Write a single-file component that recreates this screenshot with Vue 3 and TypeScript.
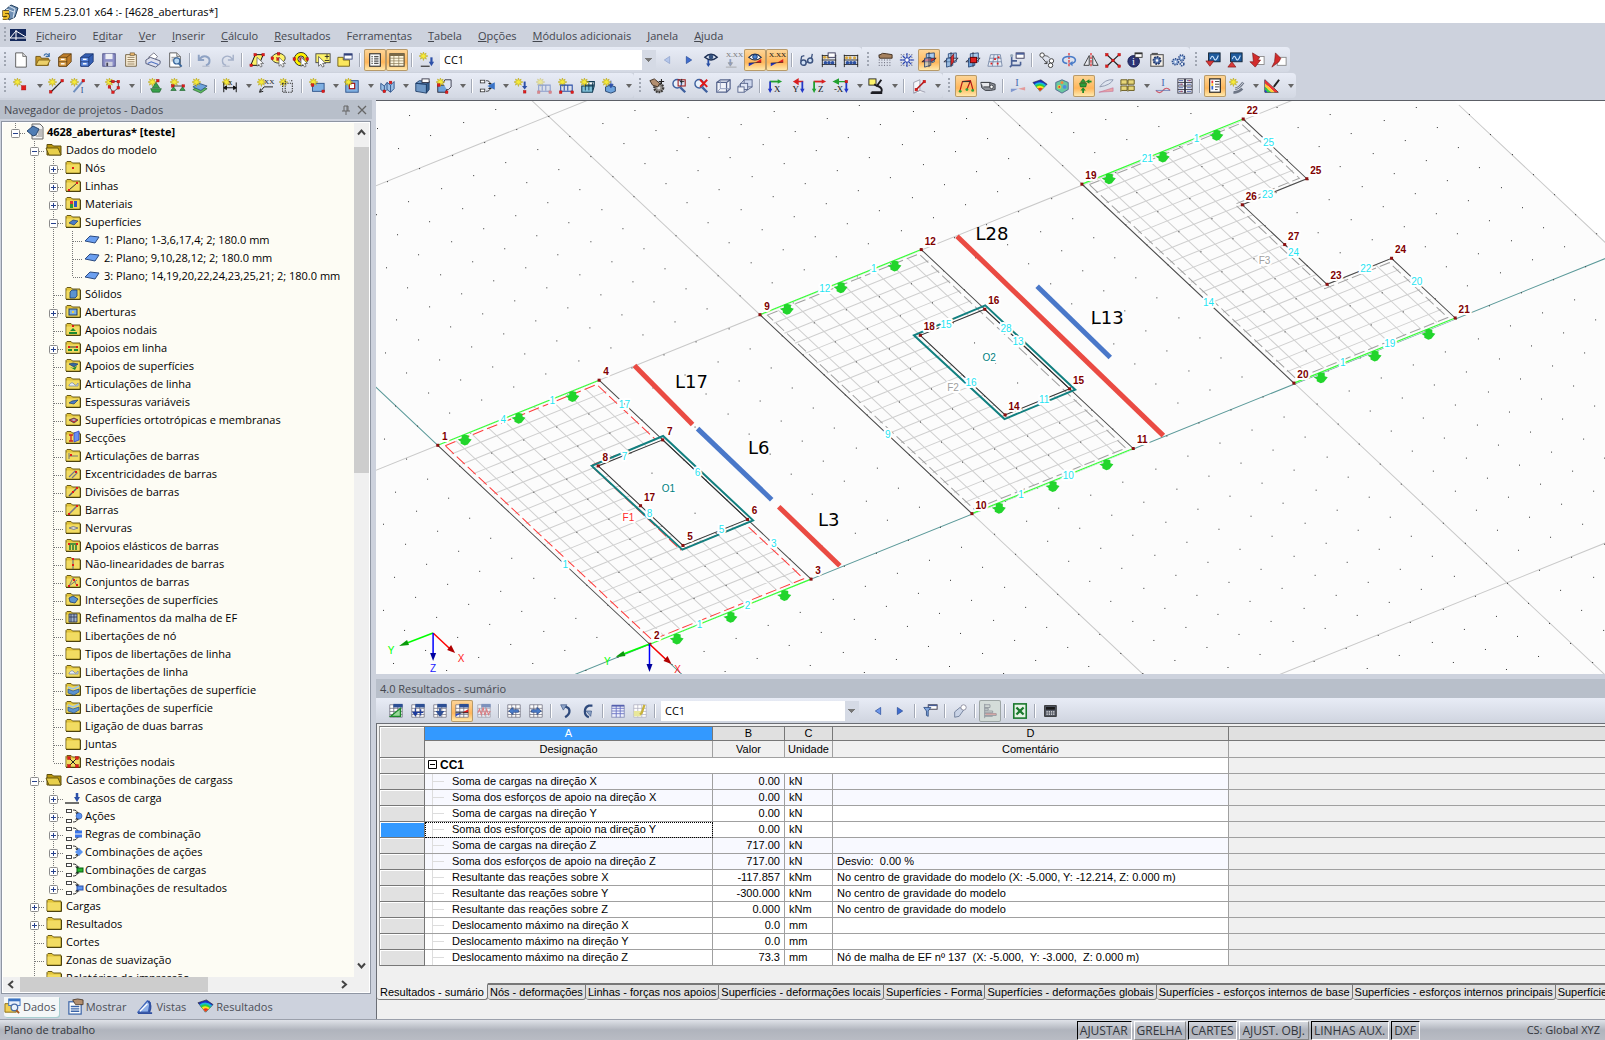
<script setup lang="ts">
import { ref } from 'vue'

type Pt = [number, number]

/* ---------- icon drawing helpers ---------- */
const p = (d: string, fill = 'none', stroke = 'none', w = 1) =>
  `<path d="${d}" fill="${fill}" stroke="${stroke}" stroke-width="${w}"/>`
const box = (x: number, y: number, w: number, h: number, fill: string, stroke = 'none', sw = 1) =>
  `<rect x="${x}" y="${y}" width="${w}" height="${h}" fill="${fill}" stroke="${stroke}" stroke-width="${sw}"/>`
const dot = (x: number, y: number, r: number, fill: string, stroke = 'none', sw = 1) =>
  `<circle cx="${x}" cy="${y}" r="${r}" fill="${fill}" stroke="${stroke}" stroke-width="${sw}"/>`
const red = (x: number, y: number, s = 3) => box(x - s / 2, y - s / 2, s, s, '#e01c1c', '#a01010', 0.4)
const rd = (x: number, y: number) => box(x - 1, y - 1, 2, 2, '#e01c1c')
const word = (x: number, y: number, s: string, size = 8, fill = '#333') =>
  `<text x="${x}" y="${y}" font-size="${size}" font-family="Liberation Serif, serif" fill="${fill}">${s}</text>`
const dashed = (s: string, pattern: string) => s.replace('/>', ` stroke-dasharray="${pattern}"/>`)

const star = p('M5 0l.8 2.6L8 1.2 7.2 3.8 10 4.5 7.2 5.4 8.3 8 5.7 6.5 5 9.5 4.1 6.5 1.5 8 2.6 5.4 0 4.5 2.7 3.7 1.6 1.2 4.2 2.6z', '#f6ea3a', '#b3a010', 0.6)
const cursor = p('M9 6v10l2.300-2 1.800 3 1.700-1-1.600-3h3.200z', '#fff', '#555', 0.8)
const yellow = '#fdf36a'
const drawer = (a: string, b: string, c: string) =>
  p('M2 6l5-4h9v9l-5 5H2z', b, c, 0.8) + p('M2 6h9v10H2z', a, c, 0.8) + p('M2 11h9M11 6l5-4', 'none', c, 0.8) +
  box(4.5, 7.5, 4, 1.5, '#fff') + box(4.5, 12.5, 4, 1.5, '#fff')
const sheet = p('M3 1h8l4 4v12H3z', '#fff', '#555', 1) + p('M11 1v4h4', '#ddd', '#555', 0.8)
const grid = (c = '#667') => p('M2 2h14v14H2zM2 6h14M2 9.5h14M2 13h14M6.5 2v14M11 2v14', '#fff', c, 0.8)
const gridTop = grid() + box(6, 1, 10.5, 4, '#2c4f95')
const dotted = dashed(p('M2 3h14M2 6h14M2 9h14M2 12h14M2 15h14', 'none', '#445', 1), '1 2')
const blue = '#4a7cc8'
const flow = box(1.5, 2.5, 5, 3, '#fff', '#333', 0.9) + box(1.5, 12.5, 5, 3, '#fff', '#333', 0.9) +
  p('M8 3c3 0 4 1 4.5 3M8 15c3 0 4-1 4.5-3', 'none', '#333', 1) + p('M10 5.5h4.500l-2 2.500zM10 12.500h4.500l-2-2.500z', '#222')
const eye = p('M2 6q7-7 14 0-7 6-14 0z', '#fff', '#1c2f55', 1.3) + dot(9, 5.5, 2.6, '#4d86d4', '#16315f')
const diag = p('M2 16V12.5L9 12z', '#2033c0') + p('M9 12l7-4v4z', '#e02020') + p('M2 12.5L16 11.5', 'none', '#222', 0.7)
const lens = dot(7, 6.5, 4.8, '#e9f2fb', '#3d5f9e', 1.6) + p('M10.5 10.5l5.5 5.5', 'none', '#3d5f9e', 2.6)
const cube = p('M2 5l4-3h11v10l-4 4H2z', '#f1f3f9', '#56648c', 1.4) + p('M2 5h11v11M13 5l4-3', 'none', '#56648c', 1.4) + p('M6 2v10h11M6 12l-4 4', 'none', '#8b97b8', 1)
const support = p('M9 5l4 6H5z', '#37a04a', '#155b22', 0.7) + p('M3 12h12l-2 4H5z', '#37a04a', '#155b22', 0.7)
const rainbow = p('M1 5l9-3 7 5-8 8z', '#1b2fc4', '#222', 0.6) + p('M2.500 7q7-5 13.500 1L9 14.600z', '#18b8d8') + p('M3.500 8.500q6-4 11 1L9 14.500z', '#2ed03c') +
  p('M5 10q4-3 8.500.5L9 14.500z', '#ffe21c') + p('M6.500 11.800q3-2 5.500.2L9 14.500z', '#f03020')
const axisPair = (h: string, v: string, s: string, left = false) =>
  (left
    ? p('M16 4H6M6 4l4-2.5v5z', h, h, 1.8) + p('M15 4v10', 'none', v, 2) + p('M12.5 12h5L15 17z', v)
    : p('M3 4h10', 'none', h, 2) + p('M12 1.5v5L17 4z', h) + p('M3.5 4v10', 'none', v, 2) + p('M1 12h5l-2.500 5z', v)) +
  word(left ? 4 : 8, 16, s, 10, '#111')
const planeCube = (flat: string, side: string) =>
  p('M6 6V2l9-1v10l-3 1', '#a9cbee', '#1d3c6e', 0.9) + p('M1 11l5-4h11l-5 4z', flat, '#223', 0.9) + p('M4 7l7-1v9l-7 2z', side, '#1d3c6e', 0.9) + p('M9 0v17', 'none', '#223', 0.8)
const chart = (c: string) => box(4, 1, 13, 10, '#1e5a9c', '#123') + p('M6 8q2-6 4-1t5-3', 'none', '#cfe6ff', 1.2) + c

const art: Record<string, string> = {
  new: sheet,
  open: p('M1 15V5h5l1 2h8v8z', '#c89a2c', '#6d5210') + p('M1 15l3-6h13l-3 6z', '#ecd06a', '#7c5f16') + p('M10 4c2-3 5-2 6 1M16 1v4h-4', 'none', '#3a6ea8', 1.3),
  drawerY: drawer('#e0a650', '#c07f2c', '#503207'),
  drawerB: drawer('#5d8ae0', '#345fb4', '#132c66'),
  save: box(2, 2, 14, 14, '#8d90c8', '#4a4d85') + box(5, 2, 8, 6, '#eceef5') + box(5, 11, 8, 5, '#cfd1e0') + box(6, 12, 2, 4, '#445'),
  pages: p('M3 3h12v13H3z', '#fff5df', '#6b5836') + p('M5 6h8M5 8.5h8M5 11h8M5 13.5h8', 'none', '#8a7350') + box(8, 1, 5, 3, '#e8b46c', '#6b5836', 0.7),
  print: p('M4 6l6-5 4 4-3 4z', '#fff', '#556', 0.8) + p('M1 9l5-3 11 4v3l-5 4L1 13z', '#dfe1ee', '#4f5674') + p('M3 13l4-2 8 3', 'none', '#4d70c0', 1.3),
  preview: sheet + p('M5 6h7M5 8h5M5 10h4', 'none', '#888') + dot(11, 10, 3.5, '#b9d8f2', '#3a679c', 1.4) + p('M13.5 13l3 3.5', 'none', '#3a679c', 2),
  undo: p('M2 3v6h6M3 8c4-6 12-3 11 3q0 3-4 4', 'none', '#8fa3c4', 2.2) + p('M6 16h8', 'none', '#aab3c6'),
  redo: p('M16 3v6h-6M15 8C11 2 3 5 4 11q0 3 4 4', 'none', '#a5b1c9', 1.6) + p('M4 16h8', 'none', '#aab3c6'),
  selPar: p('M2 15L7 3h9l-5 12z', yellow, '#111', 1.1) + red(7, 3) + red(2.5, 15) + red(16, 3) + cursor,
  selEll: `<ellipse cx="8.5" cy="7" rx="7.500" ry="5.500" fill="${yellow}" stroke="#333"/>` + red(8.5, 2) + red(1.5, 7) + red(8, 8) + cursor,
  selRing: dot(9, 8, 7.5, '#fff200', '#222') + dot(9, 8, 3.5, '#f4f4f4', '#222') + red(9, 8) + red(1.5, 8) + red(16, 8) + cursor,
  selPlus: box(1, 2, 16, 10, yellow, '#444') + p('M11 5h5M13.5 2.500v5M11 9.500h5', 'none', '#222') + p('M4 5v11l2.500-2.200 2 3.200 1.800-1-1.700-3.200h3.400z', '#fff', '#444', 0.8),
  selBox: p('M1 16V6h6v3h7v7z', '#fbe75c', '#6c5a10') + box(8, 2, 9, 6, '#fff', '#2f3f78') + box(8, 2, 9, 2, '#2f3f78'),
  list: box(3, 2, 12, 14, '#fff', '#333', 1.3) + p('M8 5h5M8 7h5M8 9h5M8 11h5M8 13h5', 'none', '#333') + p('M5 5h1.5M5 7h1.5M5 9h1.5M5 11h1.5M5 13h1.5', 'none', '#333'),
  tableY: box(1, 2, 16, 14, '#fff8e0', '#4c4330', 1.2) + box(1, 2, 16, 2.5, '#7b6a48') + p('M1 7h16M1 10h16M1 13h16M5.5 4v12M11 4v12', 'none', '#8a7b58', 0.8),
  newLoad: star + p('M2 16h10', 'none', '#222', 1.2) + p('M14 6v6', 'none', '#2c50a8', 2.5) + p('M11 11h6l-3 5z', '#2c50a8'),
  prevOff: p('M12 5v8L6 9z', '#b4c6ea', '#8b9fcb', 0.8),
  prev: p('M12 5v8L6 9z', '#6f97ea', '#254a98', 0.8),
  next: p('M6 5v8l6-4z', '#3f6cd0', '#254a98', 0.8),
  eyeLoad: p('M2 6q7-7 14 0-7 6-14 0z', '#dfe8f5', '#1c2f55', 1.6) + dot(9, 5.5, 2.6, '#33507f') + p('M6 9v5', 'none', '#274ea5', 2) + p('M3.5 13h5L6 17z', '#274ea5'),
  xxLoad: word(1, 6, 'X.XX', 8, '#777') + p('M6 8v5', 'none', '#8d9fc4', 2) + p('M3.5 12h5L6 16zM1 17h12', '#8d9fc4', '#999', 0.8),
  eyeDiag: eye + diag,
  xxDiag: word(0, 6, 'X.XX', 8, '#111') + diag,
  glasses: dot(5, 12, 3, '#cfe0f5', '#3d537f', 1.7) + dot(12.5, 9.5, 2.8, '#cfe0f5', '#3d537f', 1.7) + p('M2 10l1-5 3-1M14 7l1-5M8 12l2-1', 'none', '#3d537f', 1.5),
  abacus1: p('M1 4h16M1 9h16M1 14h16M1.5 3v14M16.5 3v14', 'none', '#222', 1) + dot(4, 6, 1.7, '#d9a83c') + dot(8, 6, 1.7, '#d9a83c') + dot(5, 12, 2, '#2b4fa0') + dot(9, 12, 2, '#2b4fa0') + dot(13, 12, 2, '#2b4fa0') + box(8, 1, 8, 5, '#fff', '#335'),
  abacus2: p('M1 4h16M1 9h16M1 14h16M1.5 3v14M16.5 3v14', 'none', '#222', 1) + dot(4, 6.5, 1.7, '#d9a83c') + dot(8, 6.5, 1.7, '#d9a83c') + dot(13, 6.5, 1.7, '#d9a83c') + dot(5, 12, 2, '#2b4fa0') + dot(9, 12, 2, '#2b4fa0') + dot(13, 12, 2, '#2b4fa0'),
  handGrid: dotted + p('M2 4q4-4 9-2l6 1v4H9L3 7z', '#a5815f', '#3c2b1c'),
  starGrid: dotted + p('M9 1v16M1 9h16M4 4l10 10M14 4L4 14', 'none', '#2340b5', 1.2) + dot(9, 9, 2.5, '#fff', '#2340b5'),
  planeA: planeCube('#e03030', '#a9cbee88'), planeB: planeCube('#cfe1f5', '#6da3dc99') + p('M9 6l3-4v9l-3 4z', '#e03030', '#500', 0.6), planeC: planeCube('#cfe1f5', '#6da3dc') + box(6, 6, 7, 6, '#e02020', '#600'),
  redGrid: p('M4 3h11l2 13H1zM3 7h13M2 11h14M8 3L6 16M12 3v13', '#e5ebf5', '#6c7f9f', 0.9) + rd(5, 13) + rd(9, 8) + rd(13, 6) + rd(12, 13),
  table3: box(8, 1, 9, 6, '#fff', '#335') + box(8, 1, 9, 2, '#4a5f98') + p('M3 4v11M3 15l-2 2M3 15h10M13 15v-4M3 10h6', 'none', '#4a6094', 1.8) + dot(3, 4, 1.8, '#9ab'),
  circles: dot(3.5, 3.5, 2.5, '#fff', '#333') + dot(14, 10, 2.5, '#fff', '#333') + dot(13, 15, 2.5, '#fff', '#333') + p('M6 4q5 0 6 3', 'none', '#555') + p('M4 7l5 6M9 13v-3M9 13H6', 'none', '#333'),
  rotate: dashed(p('M9 1v16', 'none', '#e02020', 1.3), '3 1') + p('M7 13C0 12 0 5 9 5s9 7 3 8', 'none', blue, 1.8) + p('M13 10v6l-4-3z', blue),
  mirror: dashed(p('M9 1v16', 'none', '#e02020', 1.3), '3 1') + p('M7 4v11H1zM11 4v11h6z', '#e7e9ef', '#333'),
  xConn: p('M2 3l14 13M16 3L2 16', 'none', '#222', 1.4) + red(2, 3) + red(16, 3) + red(2, 16) + red(16, 16) + red(9, 9.5),
  info: dot(7.5, 10.5, 6.5, '#2c3576', '#12184a') + word(5.5, 15, 'i', 12, '#fff') + box(9, 1, 8, 5, '#fff', '#333') + box(9, 1, 8, 1.5, '#333'),
  gearBox: box(2, 3, 14, 13, '#f5efe6', '#555', 1.2) + p('M3 1h7v2H3z', '#555') + dashed(dot(9, 9.5, 4, '#5877b0', '#24396a', 2), '2 1') + dot(9, 9.5, 1.4, '#fff'),
  gears: [[5, 11, 3.4], [12, 6.5, 3.2], [12.5, 13.5, 2]].map(([x, y, r]) => dashed(dot(x, y, r, '#9ab4dc', '#2f4f8d', 1.8), '1.5 1') + dot(x, y, 1, '#fff')).join(''),
  chDown: chart(p('M1 10h9l-4.500 6z', '#d83a3a', '#7b1010', 0.7)), chUp: chart(p('M1 17h9l-4.500-6z', '#d83a3a', '#7b1010', 0.7)),
  pdf1: box(7, 5, 10, 9, '#fff', '#888') + p('M4 1l8 5-2 3h3l-6 8-6-6h4z', '#d22c2c', '#7b1010', 0.7), pdf2: box(7, 6, 10, 9, '#fff', '#888') + p('M5 1l6 6-2 4-8 6 3-6z', '#d22c2c', '#7b1010', 0.7),

  node: star + red(12, 11, 5),
  line: star + p('M3 16L16 3', 'none', '#222', 1.3) + red(3, 15.5) + red(16, 3),
  member: star + p('M4 16L15 3', 'none', '#6f8fbf', 2.2) + red(15, 3) + word(12, 17, 'I', 9, '#2a468c'),
  poly: star + p('M5 4h10v7l-6 5-4-6', 'none', '#444', 1) + red(15, 4) + red(15, 11) + red(9, 16) + red(5, 10) + red(9, 4),
  nSup: star + support + red(11, 3),
  lSup: star + p('M2 9h14', 'none', '#333') + red(3, 9) + red(15, 9) + p('M4 10l3 4H1zM14 10l3 4h-6z', '#37a04a', '#155b22', 0.7),
  sSup: p('M1 13l7-4 9 3-7 5z', '#5cb85c', '#155b22', 0.7) + p('M1 10l7-4 9 3-7 5z', '#6da3dc', '#24466f', 0.8) + star,
  dim: star + p('M2 5v11M16 5v11M2 11h14M2 11l3-2v4zM16 11l-3-2v4z', '#111', '#111', 1.1) + word(7, 8, 'x', 9, '#111'),
  dimXX: star + word(8, 7, 'XX', 8, '#222') + p('M3 16l5-6h10M3 16l1-4M3 16l4-1', 'none', '#222', 1.1),
  selDots: star + dashed(p('M4 6h11v10H4zM7 3v14M15 3h-3', 'none', '#333', 1.2), '1.5 1.2'),
  rect: box(4, 6, 13, 9, '#7fb0e2', '#2a5088') + star + red(4, 8) + red(16, 15),
  opening: box(2, 3, 14, 13, '#7fb0e2', '#2a5088') + box(6, 6, 6, 6, '#fff', '#a01515', 1.3) + star,
  shell: p('M2 6l4 3 3-4 4 3 4-4v8l-4 4-4-3-3 3-4-3z', '#9cc0e6', '#2a5088') + p('M6 9v7M9 5v8M13 8v8', 'none', '#2a5088') + red(13, 5) + red(6, 15),
  solid: p('M2 6l4-3 11 1-3 3zM2 6l12 1v10l-12-2z', '#6f98c6', '#1f3d68') + p('M14 7l3-3v9l-3 4z', '#35608f', '#1f3d68') + box(9, 1, 8, 4, '#fff', '#334'),
  solid2: box(2, 8, 10, 8, '#6da3dc', '#223') + p('M8 6l2-4h7v8l-3 3h-2', '#dfe6f2', '#223', 0.9) + star + red(3, 8) + red(12, 16),
  flow: flow + p('M11 9l6-3v6z', '#3a74c8', '#3a74c8', 1.5),
  loadPt: star + p('M12 4v6', 'none', '#2c50a8', 2.2) + p('M9 9h6l-3 4z', '#2c50a8') + red(12, 15.5),
  loadLn: star + p('M3 16V8h13v8M3 15h13M7 8v6M11 8v6', 'none', '#2c50a8', 1.2) + red(3, 16) + red(16, 16),
  loadLnD: `<g opacity=".45">${star}${p('M3 16V8h13v8M3 15h13M7 8v6M11 8v6', 'none', '#2c50a8', 1.2)}${red(3, 16)}${red(16, 16)}</g>`,
  loadSf: p('M5 4h11v4H5z', '#fff', '#123c55', 1.4) + p('M2 9h14l-2 7H2z', '#7fc0d8', '#123c55', 1.2) + p('M6 5v9M10 5v9M14 5v9', 'none', '#123c55', 1) + star,
  loadSl: p('M4 10l5-2 6 2v5l-5 2-6-2z', '#6da3dc', '#1f3d68') + p('M10 3v5M7.500 7h5L10 11z', '#2c50a8', '#2c50a8') + star,
  gearHand: dashed(dot(11, 11, 5, '#8f8b88', '#3c3a38', 2.5), '2 1') + dot(11, 11, 1.8, '#ddd') + p('M1 3l5-2 6 5-2 4-6-2z', '#b38f70', '#3c2b1c') + p('M14 1v6M11 4h6', 'none', '#222', 1.2),
  zoomWin: lens + box(8, 2, 8, 7, 'none', '#a02020', 1.2) + p('M12 1v5M10 4h5', 'none', '#222'),
  zoomDel: lens + p('M8 2l8 8M16 2L8 10', 'none', '#e01818', 2.2),
  cube, cubes: box(8, 2, 9, 8, '#cfd8ee', '#56648c') + box(4, 6, 8, 7, '#dfe5f4', '#56648c') + box(1, 10, 7, 6, '#eef0f7', '#56648c') + p('M1 10l7-8M8 16l9-6', 'none', '#56648c'),
  axX: axisPair('#22a030', '#2438c8', 'X'), axY: axisPair('#d82020', '#2438c8', 'Y', true), axZ: axisPair('#d82020', '#22a030', 'Z'),
  axMX: p('M15 4H5M1 4l5-2.5v5z', '#22a030', '#22a030', 1.5) + p('M15 4v10', 'none', '#2438c8', 2) + p('M12.5 12h5L15 17z', '#2438c8') + red(15, 4) + word(1, 16, '-X', 10, '#111'),
  scope: box(1, 1, 8, 7, yellow, '#222') + p('M15 2l-5 7-3-2M4 16h11q2-5-4-7M3 17h13', 'none', '#1c1c22', 2.2),
  corner: p('M3 5l7-3v12l-7 3zM3 17l7-3 6 2', '#f7f7fb', '#99a') + p('M6 13l9-9', 'none', '#b01818', 1.8) + red(15, 4) + red(6, 13),
  frame: p('M2 15L5 4l9-1 3 11M14 3l-4 10', 'none', '#b51717', 1.3) + p('M5 4h9', 'none', '#333', 1.2) + dot(2.5, 15, 1.6, '#2ca63a') + dot(16.5, 14, 1.6, '#2ca63a') + dot(10, 13, 1.6, '#2ca63a'),
  beam: p('M1 5h10l6 2v6l-5 1H6L2 11z', '#8f939b', '#33363d') + p('M1 5h10v5H4', '#e6e8ec', '#33363d') + dot(13, 10, 2, '#fff', '#33363d'),
  diagI: word(6, 9, 'I', 12, '#4f71b0') + p('M1 16v-4l8 0z', '#8097cf') + p('M9 12l8-2v4z', '#e49a9a'),
  rainbow, rainCube: p('M2 5l7-3 7 3v8l-7 4-7-4z', '#69c7a0', '#49648a') + dot(6, 10, 2.2, '#f0d23c') + dot(6, 10, 1.1, '#e03030') + dot(12, 10, 2.2, '#4e8be0') + dot(9, 5, 1.7, '#f08a3c'),
  react: p('M8 1l3 4H5zM4 6h8l-1 4H5z', '#2c9e3a', '#10591c', 0.7) + p('M8 17v-4', 'none', '#1e8a2c', 2) + p('M5 14l3-3.500 3 3.500zM15 1.500v5L11 4z', '#1e8a2c') + p('M17.500 4H14', 'none', '#1e8a2c', 2),
  wing: p('M2 10q6-9 15-8-3 6-15 8z', '#dfe5f0', '#8a94ab') + p('M1 16l16-5v4z', '#e9a5a5', '#b58', 0.5),
  sheets: [[1, 2], [9, 2], [1, 9], [9, 9]].map(([x, y]) => p(`M${x} ${y}h7v5h-6l-1 1z`, '#e7d67a', '#5f5216')).join(''),
  sect: word(7, 9, 'I', 12, '#4f71b0') + p('M1 14q4 5 8 0t8 0', 'none', '#d05a6a', 1.3) + p('M1 14h16', 'none', '#5a6fae', 0.8),
  gridI: box(1, 1, 7.5, 16, '#fff', '#334') + box(9.5, 1, 7.5, 16, '#fff', '#334') + p('M1 5h16M1 9h16M1 13h16', 'none', '#334', 1) + p('M2 7h5M11 7h5M2 11h5M11 11h5M2 3h5M11 3h5M2 15h5M11 15h5', 'none', '#3a4fa0') + p('M4 7h2M13 3h2M4 15h2', 'none', '#c44'),
  legend: box(3, 1, 12, 15, '#fff', '#222', 1.3) + p('M9 4h5M9 7h5M9 10h5M9 13h3', 'none', '#333') + p('M5 3h2v3H5z', '#e33') + p('M5 6h2v3H5z', '#fc3') + p('M5 9h2v4H5z', '#36c'),
  wand: star + p('M7 12q4 0 9-7M5 16q5 1 10-4', 'none', '#6d7585', 3) + p('M7 12q4 0 9-7', 'none', '#d5dae4', 1),
  rainbowPen: p('M1 2l15 14H1z', '#fff', '#222', 1) + p('M1 2v14h3V5z', '#2040d8') + p('M1 2l15 14h-4L1 6z', '#e33') + p('M1 6l11 10H8L1 10z', '#fc3') + p('M1 10l7 6H4l-3-3z', '#3c4') + p('M11 10l6-8', 'none', '#222', 2.2),

  gTri: gridTop + p('M3 15L14 6v9z', '#9ad89a', '#1e8a2c', 1.5), gPlus: gridTop + p('M6 6v6M3.5 10.5L6 14l2.500-3.500zM12 7v7M9 10.5h6', '#1c3a9c', '#1c3a9c', 1.3),
  gDown: gridTop + p('M9 6v5M6 10h6l-3 4z', '#2f4f95', '#2f4f95', 2), gDiag: gridTop + p('M2 15v-3l7-1z', '#24c') + p('M9 11l7-4v4z', '#e02020') + p('M2 11h14', 'none', '#111'),
  gWave: `<g opacity=".55">${gridTop}${p('M2 11l2-4 2 6 2-8 2 9 2-7 2 6 2-4', 'none', '#e03030', 1.2)}</g>`,
  gLeft: grid() + p('M3 9l5-4v2.5h6v3H8V13z', blue, '#1c3a7c', 0.7), gRight: grid() + p('M15 9l-5-4v2.5H4v3h6V13z', blue, '#1c3a7c', 0.7),
  curlR: p('M8 4c6 1 7 8 0 12', 'none', '#2f4a7c', 2.6) + p('M3 2h7l-4 6z', '#8fa5c8', '#2f4a7c', 0.7), curlL: p('M14 3H10c-6 2-6 11 0 13', 'none', '#2f4a7c', 2.6) + p('M7 9h6l-1 6z', '#8fa5c8', '#2f4a7c', 0.7),
  gBlue: box(2, 3, 14, 13, '#eef0fb', '#888fb8') + p('M2 6h14M2 9h14M2 12h14M7 3v13M11.5 3v13', 'none', '#6a73c4', 1) + box(2, 2, 14, 2, '#5560ae'),
  gPen: grid('#aab') + box(2, 9, 8, 6, '#e8e79a') + p('M14 2l-3 9-2 2', 'none', '#c8b23c', 2.5),
  filter: box(7, 2, 10, 5, '#fff', '#334') + box(7, 2, 10, 1.5, '#4a5f98') + p('M2 5h8L7 9v6l-2-1V9z', '#7fa4dc', '#28477c', 0.9),
  tag: p('M3 10l6-5 4 3-5 7-5 1z', '#c9d3e6', '#6e7c98') + dot(13, 5, 3, '#fff', '#889'),
  bars: p('M3 1v16M3 2h6v3H3M3 6h4v2H3M3 9h9v2H3M3 12h13v2H3M3 15h9', 'none', '#8a8f98', 0.9) + p('M4 12.5h12', 'none', '#d88', 1),
  excel: box(2, 1, 14, 16, '#e6f3e6', '#1b7a2e', 1.8) + p('M5 5l8 8M13 5l-8 8', 'none', '#1b7a2e', 2.6),
  calc: box(3, 3, 13, 12, '#555a66', '#222') + box(4.5, 4.5, 10, 3, '#1a1a1a') + dashed(p('M5 10h9M5 12.5h9', 'none', '#eee', 1.5), '1.5 1'),
  tabData: p('M1 15V6h5l1 2h6v7z', '#f1cf55', '#8b6b12') + box(5, 1, 12, 7, '#eaf1fb', '#3b74c4') + box(5, 1, 12, 2.5, '#3b74c4') + dot(11, 10, 3.5, '#e9f2fb', '#4a6ea8', 1.4) + p('M13 13l3 3', 'none', '#a8551c', 2),
  tabShow: box(2, 4, 13, 13, '#fff', '#3b64a8', 1.3) + p('M4 9h9M4 11.500h9M4 14h9', 'none', '#3b64a8', 1.5) + p('M6 2q5-2 11 0v5H9z', '#b38f70', '#3c2b1c', 0.8),
  tabView: p('M1 15L11 3l3 2-2 10z', '#8fb0e8', '#3e64b8', 1.4) + p('M1 16h15M12 3q4 5 1 12', 'none', '#2f4fa0', 2) + p('M3 14l8-8', 'none', '#fff', 1.4),
}

/* ---------- menus and toolbars ---------- */
// each entry: text before the mnemonic, the mnemonic, text after it
const menus: [string, string, string][] = [
  ['', 'F', 'icheiro'], ['E', 'd', 'itar'], ['', 'V', 'er'], ['', 'I', 'nserir'], ['', 'C', 'álculo'], ['', 'R', 'esultados'],
  ['Ferrame', 'n', 'tas'], ['', 'T', 'abela'], ['', 'O', 'pções'], ['', 'M', 'ódulos adicionais'], ['', 'J', 'anela'], ['', 'A', 'juda'],
]

// '|' separator, suffix '*' pressed, suffix '+' drop-down arrow
const parse = (s: string) => s.split(' ').map((t) => ({ name: t.replace(/[*+]$/, ''), on: t.endsWith('*'), more: t.endsWith('+') }))
type Tool = { name: string; on: boolean; more: boolean }
type Group = { items: Tool[]; tail?: Tool[] }
const rows: Group[][] = [
  [
    {
      items: parse('new open drawerY drawerB save pages print preview | undo redo | selPar selEll selRing selPlus selBox | list* tableY* | newLoad'),
      tail: parse('prevOff next eyeLoad xxLoad eyeDiag* xxDiag* | glasses abacus1 abacus2'),
    },
    { items: parse('handGrid starGrid planeA* planeB planeC redGrid table3 | circles rotate mirror xConn info gearBox gears') },
    { items: parse('chDown chUp pdf1 pdf2') },
  ],
  [
    { items: parse('node+ line member+ poly+ | nSup lSup sSup | dim+ dimXX selDots | rect+ opening+ shell+ solid solid2+ | flow+ loadPt loadLnD loadLn loadSf loadSl+') },
    { items: parse('gearHand zoomWin zoomDel cube cubes | axX axY axZ axMX+ scope+ | corner+') },
    { items: parse('frame* beam | diagI rainbow rainCube react* wing sheets+ sect gridI | legend* wand+ rainbowPen+') },
  ],
]
const resBarA = parse('gTri gPlus gDown gDiag* gWave | gLeft gRight | curlR curlL | gBlue gPen |')
const resBarB = parse('prev next | filter | tag | bars* | excel | calc')
const loadCase = ref('CC1')

/* ---------- project tree ---------- */
const folder = p('M1 14V3.5l1-1h4l1.500 1.500H15V14z', '#e2c43a', '#6a5a18') + p('M1.5 5.5h13v8h-13z', '#f2dc62') + p('M1 14.5h14.500V5', 'none', '#4c430f', 1)
const folderOpen = p('M1 14V3.5h5l1.500 1.500H15v9z', '#b8960f', '#5e4e0c') + p('M3 14L0 7h12l3 7z', '#e8cf4a', '#5e4e0c', 0.9)
const leaf: Record<string, string> = {
  project: p('M5 1h8l3 3v12H5z', '#f2f2f2', '#666') + p('M11 7h4M11 9h4M11 11h4M9 13h6', 'none', '#888') + p('M0 8l6-5 6 3-3 6-3 1z', '#4f7db4', '#1f3c63', 0.9),
  open: folderOpen, folder,
  nos: folder + rd(8, 9), linhas: folder + p('M4 13l8-7', 'none', '#333') + rd(12, 6) + rd(4, 13),
  mat: folder + box(5, 6, 3, 3, '#d33') + box(5, 9, 3, 4, '#2a9a3a') + p('M9 6h3v6H9z', '#2b56c8'),
  sup: folder + p('M4 10l4-3 5 1-4 4z', blue, '#1d3c6e', 0.7), solid: folder + p('M5 7l2-2h5v6l-2 2H5z', '#5b93cf', '#1d3c6e', 0.8),
  open2: folder + box(4, 6, 8, 6, '#7fb0e2', '#1d3c6e') + box(7, 8, 2, 2, '#e8cf4a'),
  apNo: folder + p('M8 7l3 3H5zM4 11h8v2H4z', '#1f8a30') + rd(8, 5), apLi: folder + p('M4 8h9', 'none', '#333') + rd(4, 8) + rd(12, 8) + p('M3 10h4v2H3zM9 10h4v2H9z', '#1f8a30'),
  apSu: folder + p('M4 7l4-1 5 1-4 3z', '#34699f', '#1d3c6e', 0.7) + p('M5 10l3 1 4-2-2 4z', '#1f8a30'), art: folder + p('M4 10q3-4 5-1t4-1v3H4z', '#e8eef5', '#7a8ba8', 0.8),
  esp: folder + p('M4 10l3-2 6-1-4 4z', blue, '#1d3c6e', 0.7), orto: folder + p('M4 9l5-2 4 2-4 3z', '#c33', '#335', 0.7) + p('M6 9l3-1 2 1-2 1z', '#9cc4ea'),
  sec: folder + p('M9 4l5-2v9l-5 2z', '#6b8ff0', '#2438c8', 0.7) + p('M4 6h4M6 6v6M4 12h4', 'none', '#c22', 1.3),
  artB: folder + p('M4 6v6M4 9h9', 'none', '#777') + rd(6, 8), exc: folder + p('M4 12l6-6 2 2-5 5', 'none', '#778', 1.2) + rd(11, 7),
  div: folder + p('M4 13l8-8', 'none', '#556', 1.5) + rd(8, 9) + rd(12, 5), bar: folder + p('M4 13l8-8', 'none', '#778', 1.5) + rd(12, 5) + rd(4, 13),
  nerv: folder + p('M4 9q4-3 9 0-4 3-9 0z', '#ddd', '#777', 0.9), apEl: folder + p('M4 7h9M5 8v5M8 8v5M11 8v5', 'none', '#1f7a30', 1.5) + rd(4, 7) + rd(12, 7),
  nao: folder + p('M8 3v11', 'none', '#777', 1.2) + rd(8, 4) + rd(8, 10), conj: folder + p('M4 13l4-8 4 8M4 13l8-6', 'none', '#777', 1) + rd(4, 13) + rd(9, 7) + rd(12, 12),
  int: folder + p('M4 7l4-2 5 3-3 4-5-1z', '#5b93cf', '#1d3c6e', 0.8), ref: folder + p('M4 5h8v8H4zM6 5v8M9 5v8M4 8h8', '#9fb0cc', '#34405c', 0.9),
  blueF: folder + p('M3 8l5 2 6-2v3l-5 3-6-2z', '#5b93cf', '#2a5088', 0.7) + p('M3 6l5 2 6-3', 'none', '#9cc4ea', 1.5),
  rest: folder + p('M4 5l8 8M12 5l-8 8', 'none', '#222', 1) + red(4, 5) + red(12, 5) + red(4, 13) + red(12, 13),
  plane: p('M1 10l5-5 9 1-4 6z', '#6b9ff0', '#2b4a80', 1),
  caso: p('M0 14h14', 'none', '#222', 1.3) + p('M12 4v5', 'none', '#2c50a8', 2.5) + p('M9 8h6l-3 5z', '#2c50a8'),
  acao: flow + dot(14, 9, 3, '#5b93ef', '#2c50a8', 0.6), regra: flow + box(10, 5.5, 7, 3, '#3a74e8') + box(10, 9.5, 7, 3, '#3a74e8'),
  cAcao: flow + p('M14 5l4 4-4 4-4-4z', '#5b93ef'), cCarga: flow + box(12, 7, 6, 4, '#27b52f', '#0a5c12'), cRes: flow + box(12, 7, 6, 4, '#5b93ef', '#2c50a8'),
}
type Row = { depth: number; text: string; icon: string; sign: string }
const source = `0-project:4628_aberturas* [teste]
1-open:Dados do modelo
2+nos:Nós
2+linhas:Linhas
2+mat:Materiais
2-sup:Superfícies
3 plane:1: Plano; 1-3,6,17,4; 2; 180.0 mm
3 plane:2: Plano; 9,10,28,12; 2; 180.0 mm
3 plane:3: Plano; 14,19,20,22,24,23,25,21; 2; 180.0 mm
2 solid:Sólidos
2+open2:Aberturas
2 apNo:Apoios nodais
2+apLi:Apoios em linha
2 apSu:Apoios de superfícies
2 art:Articulações de linha
2 esp:Espessuras variáveis
2 orto:Superfícies ortotrópicas e membranas
2 sec:Secções
2 artB:Articulações de barras
2 exc:Excentricidades de barras
2 div:Divisões de barras
2 bar:Barras
2 nerv:Nervuras
2 apEl:Apoios elásticos de barras
2 nao:Não-linearidades de barras
2 conj:Conjuntos de barras
2 int:Interseções de superfícies
2 ref:Refinamentos da malha de EF
2 folder:Libertações de nó
2 folder:Tipos de libertações de linha
2 art:Libertações de linha
2 blueF:Tipos de libertações de superfície
2 blueF:Libertações de superfície
2 folder:Ligação de duas barras
2 folder:Juntas
2 rest:Restrições nodais
1-open:Casos e combinações de cargass
2+caso:Casos de carga
2+acao:Ações
2+regra:Regras de combinação
2+cAcao:Combinações de ações
2+cCarga:Combinações de cargas
2+cRes:Combinações de resultados
1+folder:Cargas
1+folder:Resultados
1 folder:Cortes
1 folder:Zonas de suavização
1 folder:Relatórios de impressão`
const tree: Row[] = source.split('\n').map((l) => {
  const c = l.indexOf(':')
  return { depth: Number(l[0]), sign: l[1].trim(), icon: l.slice(2, c), text: l.slice(c + 1) }
})
const continues = (i: number, k: number) => {
  for (let j = i + 1; j < tree.length; j++) {
    if (tree[j].depth < k) return false
    if (tree[j].depth === k) return true
  }
  return k === 1
}
const branch = (i: number, k: number) => {
  const own = k === tree[i].depth
  const more = continues(i, k)
  let d = ''
  if (more || own) d += `M9.5 0V${more ? 18 : 10}`
  if (own) d += 'M10 10.5H19'
  return d
}

/* ---------- model view ---------- */
// screen vectors of a slab's short side (5 m) and long side (10 m)
const A: Pt = [161, -65]
const B: Pt = [211.6, 198.6]
const at = (o: Pt, u: number, v: number): Pt => [
  Math.round((o[0] + A[0] * u + B[0] * v) * 10) / 10,
  Math.round((o[1] + A[1] * u + B[1] * v) * 10) / 10,
]
const poly = (pts: Pt[]) => pts.map((q) => q.join(',')).join(' ')
const seg = (a: Pt, b: Pt) => `M${a[0]} ${a[1]}L${b[0]} ${b[1]}`
const origins: Pt[] = [[437.7, 445.7], [759.3, 315.3], [1080.7, 185]]

const gridDots: Pt[] = []
for (let i = -22; i <= 30; i++)
  for (let j = -22; j <= 32; j++) {
    const q = at(origins[0], i / 5, j / 10)
    if (q[0] > 376 && q[0] < 1605 && q[1] > 105 && q[1] < 674) gridDots.push(q)
  }

const e = 0.012
const f = 0.03
const slabs = origins.map((o, n) => {
  let mesh = ''
  for (let i = 1; i < 10; i++) mesh += seg(at(o, i / 10, 0.01), at(o, i / 10, 0.99))
  for (let j = 1; j < 20; j++) mesh += seg(at(o, 0.02, j / 20), at(o, 0.98, j / 20))
  const notched: Pt[] = [at(o, 0, 0), at(o, 1, 0), at(o, 1, 0.3), at(o, 0.6, 0.3), at(o, 0.6, 0.7), at(o, 1, 0.7), at(o, 1, 1), at(o, 0, 1)]
  const full: Pt[] = [at(o, 0, 0), at(o, 1, 0), at(o, 1, 1), at(o, 0, 1)]
  const inNotch: Pt[] = [at(o, f, e), at(o, 1 - f, e), at(o, 1 - f, 0.3 - e), at(o, 0.6 - f, 0.3 - e), at(o, 0.6 - f, 0.7 + e), at(o, 1 - f, 0.7 + e), at(o, 1 - f, 1 - e), at(o, f, 1 - e)]
  const inFull: Pt[] = [at(o, f, e), at(o, 1 - f, e), at(o, 1 - f, 1 - e), at(o, f, 1 - e)]
  return {
    id: `clip${n}`, mesh,
    outline: poly(n === 2 ? notched : full),
    clip: poly(notched),
    inner: poly(n === 1 ? inFull : inNotch),
    opening: n < 2 ? poly([at(o, 1, 0.3), at(o, 0.6, 0.3), at(o, 0.6, 0.7), at(o, 1, 0.7)]) : '',
    rim: n < 2 ? poly([at(o, 1.02, 0.287), at(o, 0.572, 0.291), at(o, 0.578, 0.714), at(o, 1.02, 0.711)]) : '',
    edges: seg(at(o, 0, 0), at(o, 1, 0)) + seg(at(o, 0, 1), at(o, 1, 1)),
    supports: [1 / 6, 0.5, 5 / 6].flatMap((t) => [at(o, t, 0), at(o, t, 1)]),
    dash: n === 0 ? '#ff3a3a' : '#a0a0a0',
  }
})

const [o1, o2, o3] = origins
const nodes: [string, Pt][] = [
  ['1', at(o1, 0, 0)], ['4', at(o1, 1, 0)], ['3', at(o1, 1, 1)], ['2', at(o1, 0, 1)], ['7', at(o1, 1, 0.3)], ['8', at(o1, 0.6, 0.3)], ['5', at(o1, 0.6, 0.7)], ['6', at(o1, 1, 0.7)], ['17', at(o1, 0.6, 0.5)],
  ['9', at(o2, 0, 0)], ['12', at(o2, 1, 0)], ['11', at(o2, 1, 1)], ['10', at(o2, 0, 1)], ['16', at(o2, 1, 0.3)], ['18', at(o2, 0.6, 0.3)], ['14', at(o2, 0.6, 0.7)], ['15', at(o2, 1, 0.7)],
  ['19', at(o3, 0, 0)], ['22', at(o3, 1, 0)], ['21', at(o3, 1, 1)], ['20', at(o3, 0, 1)], ['25', at(o3, 1, 0.3)], ['26', at(o3, 0.6, 0.3)], ['23', at(o3, 0.6, 0.7)], ['24', at(o3, 1, 0.7)], ['27', at(o3, 0.6, 0.5)],
]
const lineTags: [string, number, number][] = [
  ['4', 503, 420], ['1', 552, 401], ['17', 624, 405], ['7', 624, 457], ['6', 697, 473], ['8', 649, 514], ['5', 721, 530], ['3', 773, 544], ['2', 747, 606], ['1', 699, 625], ['1', 565, 565],
  ['12', 824, 290], ['1', 873, 270], ['15', 945, 326], ['28', 1005, 330], ['13', 1017, 343], ['16', 970, 384], ['11', 1043, 400], ['9', 887, 435], ['10', 1067, 476], ['1', 1020, 495],
  ['21', 1146, 160], ['1', 1195, 140], ['25', 1267, 144], ['23', 1266, 196], ['24', 1292, 254], ['22', 1364, 270], ['20', 1415, 283], ['19', 1388, 345], ['1', 1341, 364], ['14', 1207, 304],
]
const faceTags: [string, number, number, string][] = [
  ['O1', 668, 488, '#008080'], ['F1', 628, 517, '#ff2a2a'], ['O2', 988, 358, '#008080'], ['F2', 952, 388, '#a0a0a0'], ['F3', 1263, 261, '#a0a0a0'],
]
const marks: [Pt, Pt, string][] = [
  [[634, 366], [692, 425], '#ea4b43'], [[697, 429], [771, 500], '#4a78c9'], [[778, 507], [839, 566], '#ea4b43'],
  [[956, 237], [1162, 436], '#ea4b43'], [[1036, 287], [1109, 358], '#4a78c9'],
]
const markTags: [string, number, number][] = [['L17', 691, 389], ['L6', 758, 454], ['L3', 828, 526], ['L28', 991, 241], ['L13', 1106, 325]]
const guidesGrey = seg(at(o1, -1, 0), at(o1, 6, 0)) + seg(at(o1, -1, -1), at(o1, 3, -1)) + seg(at(o1, -1, 2), at(o1, 7, 2)) +
  seg(at(o1, 2, -1.2), at(o1, 2, 2)) + seg(at(o1, 4, -1), at(o1, 4, 3)) + seg([1457, 106], [1605, 245])
const guidesTeal = seg(at(o1, 0, -1), at(o1, 0, 0)) + seg(at(o1, 0, 1), at(o1, 0, 1.2)) + seg(at(o1, -1, 1), at(o1, 7, 1))

/* ---------- result table ---------- */
type Res = [string, string, string, string]
const results: Res[] = [
  ['Soma de cargas na direção X', '0.00', 'kN', ''],
  ['Soma dos esforços de apoio na direção X', '0.00', 'kN', ''],
  ['Soma de cargas na direção Y', '0.00', 'kN', ''],
  ['Soma dos esforços de apoio na direção Y', '0.00', 'kN', ''],
  ['Soma de cargas na direção Z', '717.00', 'kN', ''],
  ['Soma dos esforços de apoio na direção Z', '717.00', 'kN', 'Desvio:  0.00 %'],
  ['Resultante das reações sobre X', '-117.857', 'kNm', 'No centro de gravidade do modelo (X: -5.000, Y: -12.214, Z: 0.000 m)'],
  ['Resultante das reações sobre Y', '-300.000', 'kNm', 'No centro de gravidade do modelo'],
  ['Resultante das reações sobre Z', '0.000', 'kNm', 'No centro de gravidade do modelo'],
  ['Deslocamento máximo na direção X', '0.0', 'mm', ''],
  ['Deslocamento máximo na direção Y', '0.0', 'mm', ''],
  ['Deslocamento máximo na direção Z', '73.3', 'mm', 'Nó de malha de EF nº 137  (X: -5.000,  Y: -3.000,  Z: 0.000 m)'],
]
const selected = ref(3)
const tinted = (i: number) => i === 0 || i === 1 || i === 4 || i === 5
const sheetTabs = ['Resultados - sumário', 'Nós - deformações', 'Linhas - forças nos apoios', 'Superfícies - deformações locais', 'Superfícies - Forma',
  'Superfícies - deformações globais', 'Superfícies - esforços internos de base', 'Superfícies - esforços internos principais', 'Superfícies']
const sheetTab = ref(0)
const navTabs = [['tabData', 'Dados'], ['tabShow', 'Mostrar'], ['tabView', 'Vistas'], ['rainbow', 'Resultados']]
const navTab = ref(0)
const toggles: [string, boolean][] = [['AJUSTAR', true], ['GRELHA', false], ['CARTES', true], ['AJUST. OBJ.', false], ['LINHAS AUX.', true], ['DXF', true]]
</script>

<template>
  <div class="app">
    <header class="title">
      <svg class="logo" viewBox="0 0 18 18"><path d="M3 8l7-6 7 3-3 9-6 3z" fill="#6f8fb4" stroke="#23405f" /><path d="M8 3l6 3-2 9M5 6l8 3" fill="none" stroke="#dbe7f3" /><path d="M8 9H3v3q5-1 4 2-1 2-5 1" fill="none" stroke="#5c430a" stroke-width="3.4" /><path d="M8 9H3v3q5-1 4 2-1 2-5 1" fill="none" stroke="#f0c02c" stroke-width="2" /></svg>
      <span>RFEM 5.23.01 x64 :- [4628_aberturas*]</span>
    </header>

    <nav class="menu">
      <i class="grip"></i>
      <svg class="brand" viewBox="0 0 16 12"><rect width="16" height="12" fill="#14295c" /><path d="M0 9h16M6 1v10M0 9l6-7 10 6" fill="none" stroke="#fff" /></svg>
      <button v-for="m in menus" :key="m[2]">{{ m[0] }}<u>{{ m[1] }}</u>{{ m[2] }}</button>
    </nav>

    <div class="bars">
      <div v-for="(row, r) in rows" :key="r" class="barrow">
        <div v-for="(g, n) in row" :key="n" class="group">
          <i class="grip"></i>
          <template v-for="(b, k) in g.items" :key="k">
            <i v-if="b.name === '|'" class="sep"></i>
            <button v-else class="tool" :class="{ on: b.on, more: b.more }" :aria-label="b.name"><svg viewBox="0 0 18 18" v-html="art[b.name]"></svg><i v-if="b.more" class="arrow"></i></button>
          </template>
          <template v-if="g.tail">
            <select v-model="loadCase" class="combo" aria-label="Caso de carga"><option>CC1</option></select>
            <template v-for="(b, k) in g.tail" :key="k">
              <i v-if="b.name === '|'" class="sep"></i>
              <button v-else class="tool" :class="{ on: b.on }" :aria-label="b.name"><svg viewBox="0 0 18 18" v-html="art[b.name]"></svg></button>
            </template>
          </template>
        </div>
      </div>
    </div>

    <div class="work">
      <aside class="nav">
        <div class="caption">
          <span>Navegador de projetos - Dados</span>
          <button aria-label="Fixar"><svg viewBox="0 0 10 10"><path d="M3 1h4v5M3 1v5M1 6h8M5 6v4M6 1v5" fill="none" stroke="#666" /></svg></button>
          <button aria-label="Fechar"><svg viewBox="0 0 10 10"><path d="M1 1l8 8M9 1L1 9" stroke="#666" stroke-width="1.3" /></svg></button>
        </div>
        <div class="treebox">
          <div class="treerow">
            <ul class="tree">
              <li v-for="(t, i) in tree" :key="i" :class="{ root: t.depth === 0 }">
                <svg v-for="k in t.depth + 1" :key="k" class="cell" viewBox="0 0 19 18">
                  <path v-if="branch(i, k - 1)" :d="branch(i, k - 1)" fill="none" stroke="#777" stroke-dasharray="1 1" />
                  <template v-if="k === t.depth + 1 && t.sign">
                    <rect x="5.5" y="6.5" width="8" height="8" rx="1" fill="#fff" stroke="#8b8b8b" />
                    <path :d="t.sign === '+' ? 'M7 10.5h5M9.5 8v5' : 'M7 10.5h5'" stroke="#26418c" />
                  </template>
                </svg>
                <svg class="leaf" viewBox="0 0 18 17" v-html="leaf[t.icon]"></svg>
                <span>{{ t.text }}</span>
              </li>
            </ul>
            <div class="vscroll">
              <svg viewBox="0 0 15 24"><path d="M4 11.5l3.5-4 3.5 4" fill="none" stroke="#444" stroke-width="2" /></svg>
              <b></b>
              <svg viewBox="0 0 15 24"><path d="M4 10.5l3.5 4 3.500-4" fill="none" stroke="#444" stroke-width="2" /></svg>
            </div>
          </div>
          <div class="hscroll">
            <svg viewBox="0 0 17 15"><path d="M10 4L6 7.5l4 3.5" fill="none" stroke="#444" stroke-width="2" /></svg>
            <b></b>
            <svg viewBox="0 0 17 15"><path d="M5 4l4 3.5L5 11" fill="none" stroke="#444" stroke-width="2" /></svg>
          </div>
        </div>
        <div class="navtabs">
          <button v-for="(t, i) in navTabs" :key="t[1]" :class="{ active: i === navTab }" @click="navTab = i"><svg viewBox="0 0 18 18" v-html="art[t[0]]"></svg>{{ t[1] }}</button>
        </div>
      </aside>

      <main class="main">
        <div class="view">
          <svg viewBox="376 102 1229 572" preserveAspectRatio="xMinYMin slice" role="img" aria-label="Modelo">
            <polygon points="376,102 1453,102 1605,245 1605,674 376,674" fill="#fcfcfc" />
            <path :d="guidesGrey" fill="none" stroke="#c9c9c9" />
            <path :d="guidesTeal" fill="none" stroke="#5c9a9a" />
            <g v-for="s in slabs" :key="s.id">
              <clipPath :id="s.id"><polygon :points="s.clip" /></clipPath>
              <path :d="s.mesh" :clip-path="`url(#${s.id})`" fill="none" stroke="#cfcfcf" />
            </g>
            <rect v-for="(q, i) in gridDots" :key="i" :x="Math.round(q[0])" :y="Math.round(q[1])" width="1" height="1" fill="#333" />
            <g v-for="s in slabs" :key="s.id">
              <polygon :points="s.outline" fill="none" stroke="#4a4a4a" />
              <polygon :points="s.inner" fill="none" :stroke="s.dash" stroke-dasharray="11 4" />
              <path :d="s.edges" fill="none" stroke="#fff" stroke-width="2" />
              <path :d="s.edges" fill="none" stroke="#35ff35" stroke-width="1.2" />
              <template v-if="s.opening">
                <polygon :points="s.opening" fill="none" stroke="#333" />
                <polygon :points="s.rim" fill="none" stroke="#128080" stroke-width="2" />
              </template>
              <path v-for="(q, i) in s.supports" :key="i" :d="`M${q[0]} ${q[1]}l4 1v3l3 1-4 5-3 1-4-2 0-2-3-2 4-1 0-3z`" fill="#22d52c" />
            </g>
            <rect v-for="n in nodes" :key="n[0]" :x="n[1][0] - 1.5" :y="n[1][1] - 1.5" width="3" height="3" fill="#8b1010" />
            <g v-for="(a, i) in [[433, 633], [649, 644]]" :key="i" stroke-width="1.5">
              <g :transform="`translate(${a[0]} ${a[1]})`">
                <path d="M0 0L-26 10" stroke="#0f0" /><path d="M-34 13l8-6 2 5z" fill="#0a9a0a" />
                <path d="M0 0L17 16" stroke="#f00" /><path d="M22 20l-8-3 4-5z" fill="#b00000" />
                <path d="M0 0V22" stroke="#00f" /><path d="M-3 20h6L0 28z" fill="#0000a0" />
                <text x="-42" y="21" class="axis" fill="#0f0">Y</text>
                <text x="28" y="29" class="axis" fill="#f22">X</text>
                <text v-if="i === 0" x="0" y="39" class="axis" fill="#22f">Z</text>
              </g>
            </g>
            <text v-for="(t, i) in faceTags" :key="`f${i}`" :x="t[1]" :y="t[2] + 4" :fill="t[3]" class="tag">{{ t[0] }}</text>
            <text v-for="(t, i) in lineTags" :key="`l${i}`" :x="t[1]" :y="t[2] + 3" fill="#1fe4f2" class="tag">{{ t[0] }}</text>
            <text v-for="n in nodes" :key="`n${n[0]}`" :x="n[1][0] + (n[0].length > 1 ? 9 : 7)" :y="n[1][1] - 5" fill="#800000" class="tag strong">{{ n[0] }}</text>
            <path v-for="(m, i) in marks" :key="`m${i}`" :d="seg(m[0], m[1])" :stroke="m[2]" stroke-width="5" />
            <text v-for="t in markTags" :key="t[0]" :x="t[1]" :y="t[2]" class="mark">{{ t[0] }}</text>
          </svg>
        </div>

        <section class="results">
          <div class="caption"><span>4.0 Resultados - sumário</span></div>
          <div class="resbar">
            <template v-for="(b, k) in resBarA" :key="k">
              <i v-if="b.name === '|'" class="sep"></i>
              <button v-else class="tool" :class="{ on: b.on }" :aria-label="b.name"><svg viewBox="0 0 18 18" v-html="art[b.name]"></svg></button>
            </template>
            <select v-model="loadCase" class="combo" aria-label="Caso de carga dos resultados"><option>CC1</option></select>
            <template v-for="(b, k) in resBarB" :key="k">
              <i v-if="b.name === '|'" class="sep"></i>
              <button v-else class="tool" :class="{ flat: b.on }" :aria-label="b.name"><svg viewBox="0 0 18 18" v-html="art[b.name]"></svg></button>
            </template>
          </div>
          <div class="sheet">
            <table>
              <colgroup><col class="c0" /><col class="c1" /><col class="c2" /><col class="c3" /><col class="c4" /><col /></colgroup>
              <thead>
                <tr class="letters"><th rowspan="2" class="rowhead"></th><th class="sel">A</th><th>B</th><th>C</th><th>D</th><td></td></tr>
                <tr class="names"><th>Designação</th><th>Valor</th><th>Unidade</th><th>Comentário</th><td></td></tr>
              </thead>
              <tbody>
                <tr><th class="rowhead"></th><td colspan="4" class="group-name"><svg viewBox="0 0 9 9"><path d="M.5.5h8v8h-8zM2 4.5h5" fill="#fff" stroke="#000" /></svg>CC1</td><td class="void"></td></tr>
                <tr v-for="(r, i) in results" :key="i" :class="{ tint: tinted(i), current: i === selected }" @click="selected = i">
                  <th class="rowhead"></th>
                  <td class="name"><i></i>{{ r[0] }}</td><td class="num">{{ r[1] }}</td><td>{{ r[2] }}</td><td>{{ r[3] }}</td><td class="void"></td>
                </tr>
              </tbody>
            </table>
            <div class="tabs">
              <button v-for="(t, i) in sheetTabs" :key="t" :class="{ active: i === sheetTab }" @click="sheetTab = i">{{ t }}</button>
            </div>
          </div>
        </section>
      </main>
    </div>

    <footer class="status">
      <span class="hint">Plano de trabalho</span>
      <button v-for="t in toggles" :key="t[0]" :class="{ down: t[1] }">{{ t[0] }}</button>
      <span class="cs">CS: Global XYZ</span>
    </footer>
  </div>
</template>

<style>
body { margin: 0; overflow: hidden; }
</style>

<style scoped>
.app { display: flex; flex-direction: column; height: 100vh; background: #cdd2dd; font: 11px/17px "Open Sans", "Noto Sans", sans-serif; color: #000; overflow: hidden; }
button { margin: 0; padding: 0; border: 0; background: none; font: inherit; color: inherit; white-space: nowrap; }
svg { display: block; flex: none; }
.title { display: flex; align-items: center; height: 23px; background: #fff; }
.logo { width: 18px; height: 18px; margin: 0 4px 0 1px; }
.menu { display: flex; align-items: center; height: 24px; color: #44474f; }
.brand { width: 16px; height: 12px; margin-right: 10px; }
.menu button { margin-right: 16px; }
.grip { flex: none; width: 2px; height: 16px; margin: 0 4px; background: repeating-linear-gradient(#a0a6b2 0 2px, transparent 2px 4px); }
.barrow { display: flex; height: 26px; }
.group { display: flex; align-items: center; height: 25px; border-radius: 0 4px 4px 0; background: linear-gradient(#e8ecf6, #d3d8e3); }
.group + .group .grip { margin: 0 5px; }
.tool { display: flex; align-items: center; width: 22px; height: 22px; box-sizing: border-box; padding: 0 3px; border-radius: 2px; }
.tool svg { width: 16px; height: 16px; overflow: visible; }
.tool.more { width: 35px; gap: 6px; }
.tool.on { background: linear-gradient(#fdd79b, #ffb65a 60%, #fff0b8); box-shadow: inset 0 0 0 1px #b79a6a; }
.tool.flat { background: #d4dcd9; box-shadow: inset 0 0 0 1px #9da5a5; }
.arrow { border: 3px solid transparent; border-top: 4px solid #666; border-bottom: 0; margin-left: 2px; }
.sep { flex: none; width: 2px; height: 14px; margin: 0 3px; background: linear-gradient(90deg, #a3a9b6 50%, #fff 50%); }
.combo { width: 216px; height: 20px; margin: 0 0 0 2px; padding: 0 4px; border: 0; border-radius: 0; appearance: none; font: inherit; color: #000; background: linear-gradient(45deg, transparent 50%, #777 50%) right 7px top 8px / 4px 4px no-repeat, linear-gradient(-45deg, transparent 50%, #777 50%) right 3px top 8px / 4px 4px no-repeat, linear-gradient(#d5dae5, #d5dae5) right / 14px 100% no-repeat, #fff; }
.work { display: flex; flex: 1; min-height: 0; gap: 4px; padding-top: 1px; }
.nav { display: flex; flex-direction: column; width: 372px; flex: none; }
.caption { display: flex; align-items: center; gap: 6px; height: 19px; flex: none; padding: 0 5px 0 4px; background: #b8bfca; color: #44474f; }
.caption span { flex: 1; }
.caption svg { width: 10px; height: 10px; }
.treebox { flex: 1; min-height: 0; display: flex; flex-direction: column; margin: 2px 1px 0; padding: 1px; border: 1px solid #8f96a3; box-shadow: inset 0 0 0 1px #fff; background: #fdfcf4; }
.treerow { display: flex; flex: 1; min-height: 0; }
.tree { flex: 1; margin: 0; padding: 0 0 0 3px; list-style: none; overflow: hidden; }
.tree li { display: flex; height: 18px; white-space: nowrap; }
.tree .root { font-weight: 700; }
.cell { width: 19px; height: 18px; }
.leaf { width: 18px; height: 17px; margin: 0 2px 0 2px; overflow: visible; }
.vscroll { display: flex; flex-direction: column; width: 15px; background: #f0f0f0; }
.vscroll svg { width: 15px; height: 24px; }
.vscroll b { background: #cdcdcd; height: 326px; margin-bottom: auto; }
.hscroll { display: flex; height: 15px; padding-right: 15px; background: #f0f0f0; flex: none; }
.hscroll svg { width: 17px; height: 15px; }
.hscroll b { width: 188px; margin-right: auto; background: #cdcdcd; }
.navtabs { display: flex; align-items: center; height: 25px; flex: none; gap: 8px; padding-left: 4px; color: #4c4f57; }
.navtabs button { display: flex; align-items: center; height: 20px; padding: 0 3px 0 0; }
.navtabs svg { width: 17px; height: 17px; margin-right: 2px; }
.navtabs .active { background: #f4f7f8; box-shadow: 1px 1px 0 #a8cfd0; border-radius: 0 0 3px 3px; }
.main { display: flex; flex-direction: column; flex: 1; min-width: 0; }
.view { flex: 1; min-height: 0; overflow: hidden; background: #fff; border-top: 1px solid #5c5f66; }
.view svg { width: 100%; height: 100%; }
.tag { font: 10px "Liberation Sans", sans-serif; text-anchor: middle; paint-order: stroke; stroke: #fff; stroke-width: 4px; stroke-linejoin: round; }
.strong { font-weight: 700; }
.axis { font: 10px "Liberation Sans", sans-serif; text-anchor: middle; }
.mark { font: 18px "DejaVu Sans", sans-serif; text-anchor: middle; }
.results { flex: none; padding-top: 5px; }
.resbar { display: flex; align-items: center; height: 25px; padding-left: 9px; background: linear-gradient(#e8ecf6, #cfd4df); border-bottom: 1px solid #6b6e75; }
.resbar .combo { width: 198px; margin-right: 8px; }
.sheet { height: 295px; background: #f0f0f0; border-left: 1px solid #6b6e75; font: 11px/15px "Liberation Sans", sans-serif; overflow: hidden; box-sizing: border-box; padding-top: 2px; }
table { width: 100%; margin-left: 2px; table-layout: fixed; border-collapse: separate; border-spacing: 0; border-top: 1px solid #777; border-left: 1px solid #999; }
.c0 { width: 45px; } .c1 { width: 288px; } .c2 { width: 72px; } .c3 { width: 48px; } .c4 { width: 396px; }
th, td { box-sizing: border-box; height: 16px; padding: 0 4px; border-right: 1px solid #a0a0a0; border-bottom: 1px solid #a0a0a0; background: #fff; font-weight: 400; text-align: left; white-space: pre; overflow: hidden; }
.letters th, .letters td { height: 14px; line-height: 13px; background: #e0e0e0; text-align: center; border-color: #777; }
.letters .sel { background: #3399ff; color: #fff; }
.names th, .names td { height: 17px; background: #f0f0f0; text-align: center; padding: 0; }
.void { background: #f0f0f0; }
tr .rowhead { background: #e1e1e1; border-color: #777; box-shadow: inset 1px 1px 0 #fff; }
.tint td:not(.void) { background: #f8f9ff; }
.group-name { font-weight: 700; font-size: 12px; padding: 0 3px; }
.group-name svg { display: inline-block; width: 9px; height: 9px; margin-right: 3px; }
.name { padding-left: 7px; }
.name i { display: inline-block; width: 11px; height: 15px; margin-right: 8px; border-left: 1px solid #ddd; vertical-align: top; background: linear-gradient(#ddd, #ddd) 0 7px / 100% 1px no-repeat; }
.num { text-align: right; }
.current .rowhead { background: #3399ff; }
.current .name { outline: 1px dotted #000; outline-offset: -1px; }
.tabs { display: flex; height: 18px; margin-top: 17px; overflow: hidden; }
.tabs button { flex: none; height: 17px; padding: 0 2px; border: 1px solid #777; border-left: 0; border-top-width: 2px; background: #e0e0e0; border-radius: 0 0 3px 3px; }
.tabs .active { padding: 0 3px; background: #f0f0f0; border-top-color: #f0f0f0; }
.status { display: flex; align-items: stretch; gap: 2px; height: 21px; flex: none; box-sizing: border-box; padding-top: 1px; border-top: 1px solid #9ba0ab; background: linear-gradient(#dfe2e8, #b0b4bd 50%, #b9bcc4); color: #33363c; }
.hint { flex: 1; padding-left: 4px; }
.status button { padding: 0 3px 0 2px; font-size: 12px; line-height: 16px; border: 1px solid; border-color: #fff #888 #888 #fff; }
.status .down { border-color: #000 #fff #fff #000; }
.cs { width: 178px; padding-right: 5px; text-align: right; }
</style>
